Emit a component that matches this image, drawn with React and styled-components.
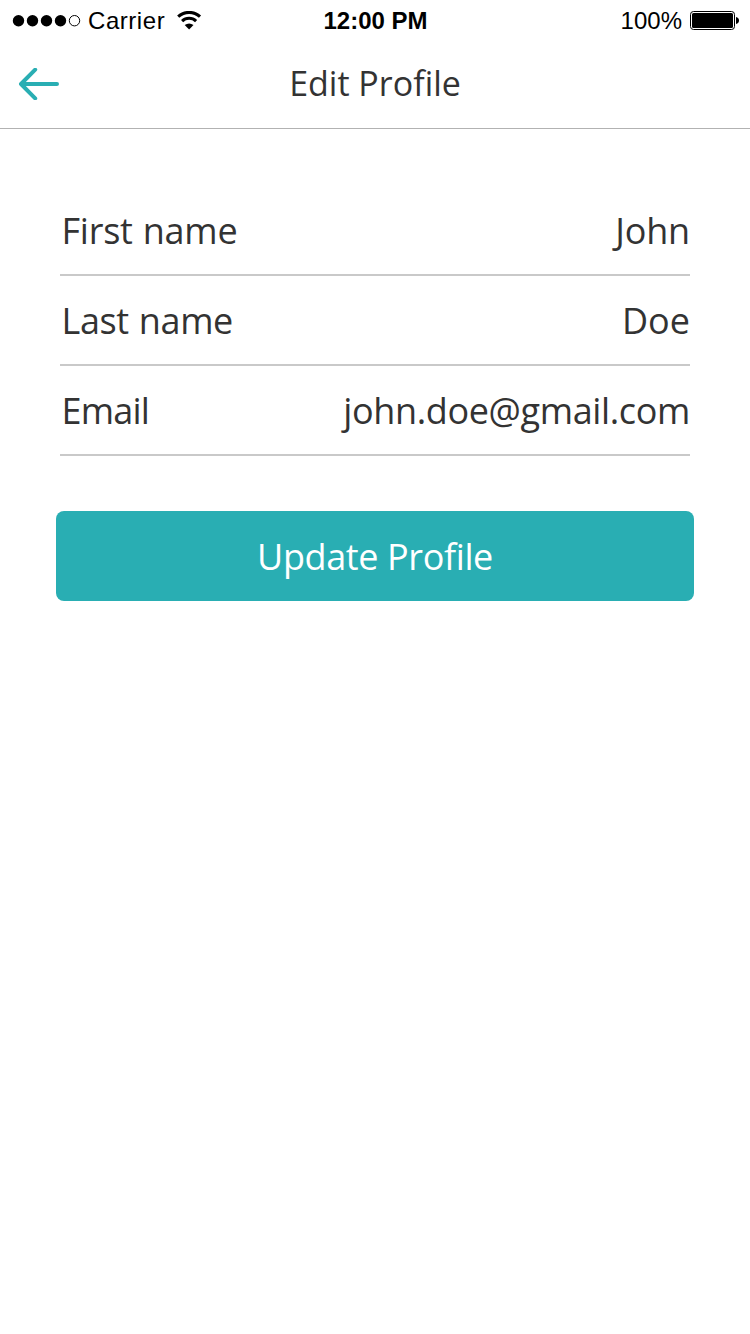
import React from "react";
import styled, { createGlobalStyle } from "styled-components";

const Global = createGlobalStyle`
  * { box-sizing: border-box; }
  body { margin: 0; background: #fff; }
`;
const Screen = styled.main`
  width: 750px;
  height: 1334px;
  background: #fff;
  color: #333;
  font-family: "Open Sans", sans-serif;
`;
const StatusBar = styled.div`
  height: 40px;
  padding: 1px 11px 0 12px;
  display: grid;
  grid-template-columns: 1fr auto 1fr;
  align-items: center;
  color: #000;
  font: 24px/40px "Liberation Sans", sans-serif;
`;
const StatusGroup = styled.div`
  display: flex;
  align-items: center;
  justify-content: ${(p) => (p.$end ? "flex-end" : "flex-start")};
`;
const StatusText = styled.span`
  font-weight: ${(p) => (p.$bold ? 700 : 400)};
  letter-spacing: ${(p) => p.$spacing || 0}px;
  margin: ${(p) => p.$margin || 0};
  white-space: nowrap;
`;
const NavBar = styled.header`
  height: 89px;
  border-bottom: 1px solid #b2b2b2;
  padding: 0 18px;
  display: grid;
  grid-template-columns: 42px 1fr 42px;
  align-items: center;
`;
const BackButton = styled.button`
  display: flex;
  padding: 0;
  border: 0;
  background: none;
`;
const Title = styled.h1`
  margin: 0;
  text-align: center;
  font-size: 34px;
  font-weight: 400;
  line-height: 86px;
  height: 88px;
`;
const Form = styled.form`
  padding: 57px 56px 0;
`;
const Fields = styled.div`
  padding: 0 4px;
`;
const Field = styled.div`
  height: 90px;
  padding: 0 0 0 1.5px;
  display: flex;
  justify-content: space-between;
  border-bottom: 2px solid #c9c9c9;
  font-size: 36px;
  line-height: 90px;
`;
const FieldText = styled.span`
  letter-spacing: ${(p) => p.$spacing}px;
  word-spacing: 1px;
`;
const SubmitButton = styled.button`
  display: block;
  width: 100%;
  height: 90px;
  margin-top: 55px;
  padding: 2px 0 0;
  border: 0;
  border-radius: 8px;
  background: #29aeb3;
  color: #fff;
  font: 36px/88px "Open Sans", sans-serif;
  letter-spacing: -0.38px;
`;
const fields = [
  { label: "First name", labelSpacing: -0.25, value: "John", valueSpacing: -0.2 },
  { label: "Last name", labelSpacing: -0.37, value: "Doe", valueSpacing: 0 },
  { label: "Email", labelSpacing: -0.8, value: "john.doe@gmail.com", valueSpacing: -0.36 },
];

export default function App() {
  return (
    <Screen>
      <Global />
      <StatusBar>
        <StatusGroup>
          <svg width="69" height="12" viewBox="0 0 69 12">
            {[6.5, 20.5, 34.5, 48.5].map((x) => <circle key={x} cx={x} cy="5.7" r="5.7" />)}
            <circle cx="62.5" cy="5.7" r="5.2" fill="none" stroke="#000" />
          </svg>
          <StatusText $margin="0 12px 0 7px" $spacing={0.55}>Carrier</StatusText>
          <svg width="25" height="20" viewBox="0 0 25 20">
            <path d="M1.2 5.7a16 16 0 0 1 21.8 0M5.1 10.1a10.2 10.2 0 0 1 14 0" fill="none" stroke="#000" strokeWidth="3.1" />
            <path d="M7.7 14.1Q12.1 10.9 16.5 14.1L12.1 18.4Z" />
          </svg>
        </StatusGroup>
        <StatusText $bold>12:00 PM</StatusText>
        <StatusGroup $end>
          <StatusText $margin="0 8px 0 0">100%</StatusText>
          <svg width="49" height="21" viewBox="0 0 49 21">
            <rect x=".5" y=".5" width="44" height="18" rx="3" fill="none" stroke="#000" />
            <rect x="2" y="2" width="41" height="15" rx="1.5" />
            <path d="M46 6q3 .7 3 3.5t-3 3.5Z" />
          </svg>
        </StatusGroup>
      </StatusBar>
      <NavBar>
        <BackButton type="button" aria-label="Back">
          <svg width="42" height="32" viewBox="0 0 42 32" fill="none" stroke="#29aeb3" strokeWidth="4" strokeLinecap="round" strokeLinejoin="round">
            <path d="M17.2 1.6 3 16l14.2 14.4M3 16h36" />
          </svg>
        </BackButton>
        <Title>Edit Profile</Title>
      </NavBar>
      <Form>
        <Fields>
          {fields.map((field) => (
            <Field key={field.label}>
              <FieldText $spacing={field.labelSpacing}>{field.label}</FieldText>
              <FieldText $spacing={field.valueSpacing}>{field.value}</FieldText>
            </Field>
          ))}
        </Fields>
        <SubmitButton type="button">Update Profile</SubmitButton>
      </Form>
    </Screen>
  );
}
